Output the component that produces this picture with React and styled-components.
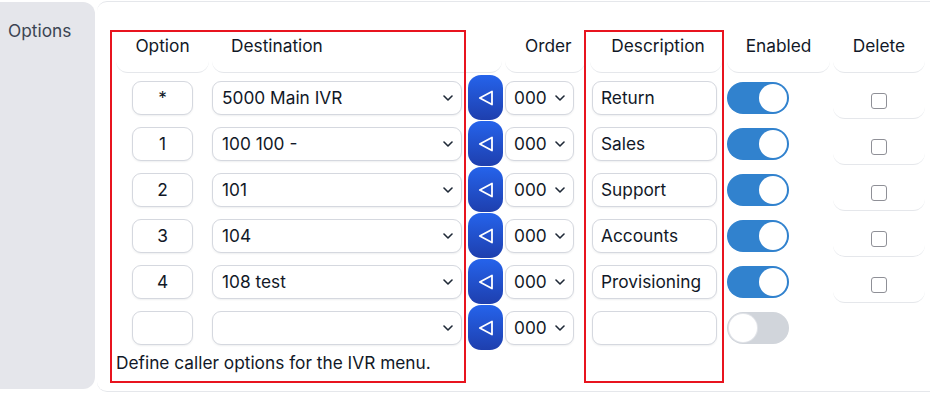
import React from "react";
import styled, { createGlobalStyle } from "styled-components";

const GlobalStyle = createGlobalStyle`
  html, body {
    margin: 0;
    padding: 0;
    background: #ffffff;
  }
  body {
    font-family: Inter, "Noto Sans", sans-serif;
    font-size: 17.3px;
    color: #111827;
  }
  * {
    box-sizing: border-box;
  }
`;

const Page = styled.div`
  display: flex;
  gap: 2px;
  width: 930px;
  padding-top: 1px;
`;

const LabelCell = styled.div`
  flex: none;
  width: 95px;
  margin: 1px 0 3px;
  padding: 18px 8px;
  background: #e5e6eb;
  border-radius: 0 12px 12px 0;
  color: #3b4452;
`;

const FieldCell = styled.div`
  flex: 1;
  padding: 28px 0 18px 19px;
  border-top: 1px solid #e5e7eb;
  border-bottom: 1px solid #e5e7eb;
  border-radius: 10px 0 0 10px;
`;

const OptionsGrid = styled.div`
  display: grid;
  grid-template-columns: 96px 253px 40px 83px 137px 108px 92px;
  grid-template-rows: 44px repeat(6, 46px) 23px;
`;

const HeadCell = styled.div`
  grid-row: 1;
  grid-column: ${(p) => p.$col};
  margin: ${(p) => p.$margin || "0 3px 1px 0"};
  padding: 6px 0 0 ${(p) => p.$padLeft || 0}px;
  text-align: ${(p) => p.$align || "center"};
  border-bottom: 1px solid #e5e7eb;
  border-radius: 0 0 12px 12px;
  color: #111827;
  line-height: 20px;
`;

const inputBase = `
  height: 34px;
  margin-top: 7px;
  align-self: start;
  display: flex;
  align-items: center;
  padding-bottom: 1px;
  border: 1px solid #d5d8df;
  border-radius: 9px;
  background: #ffffff;
  box-shadow: 0 1px 2px rgba(17, 24, 39, 0.07);
  color: #111827;
  font-size: 17.3px;
  white-space: nowrap;
`;

const KeyInput = styled.div`
  ${inputBase}
  grid-row: ${(p) => p.$row};
  grid-column: 1;
  width: 61px;
  margin-left: 16px;
  justify-content: center;
`;

const SelectBox = styled.div`
  ${inputBase}
  grid-row: ${(p) => p.$row};
  grid-column: ${(p) => p.$col};
  width: ${(p) => p.$width}px;
  justify-content: space-between;
  padding-left: ${(p) => p.$padLeft}px;
  padding-right: 8px;
`;

const DescInput = styled.div`
  ${inputBase}
  grid-row: ${(p) => p.$row};
  grid-column: 5;
  width: 125px;
  margin-left: 4px;
  padding-left: 8px;
`;

const MoveButton = styled.button`
  grid-row: ${(p) => p.$row};
  grid-column: 3;
  align-self: start;
  width: 35px;
  height: 45px;
  margin: 1px 0 0 3px;
  padding: 0;
  display: flex;
  align-items: center;
  justify-content: center;
  border: none;
  border-radius: 13px;
  background: linear-gradient(180deg, #2563eb 0%, #1e3fae 100%);
  cursor: pointer;
`;

const Toggle = styled.span`
  grid-row: ${(p) => p.$row};
  grid-column: 6;
  align-self: start;
  position: relative;
  width: 62px;
  height: 32px;
  margin: 8px 0 0 2px;
  border-radius: 16px;
  background: ${(p) => (p.$on ? "#3182ce" : "#d1d5db")};

  &::after {
    content: "";
    position: absolute;
    top: 2px;
    left: ${(p) => (p.$on ? "32px" : "2px")};
    width: 28px;
    height: 28px;
    border-radius: 50%;
    background: #ffffff;
    box-shadow: ${(p) => (p.$on ? "none" : "0 0 0 1px #e2e4e9")};
  }
`;

const DeleteCell = styled.div`
  grid-row: ${(p) => p.$row};
  grid-column: 7;
  height: 45px;
  display: flex;
  justify-content: center;
  align-items: flex-start;
  padding-top: 19px;
  border-bottom: 1px solid #e5e7eb;
  border-radius: 0 0 12px 12px;
`;

const Check = styled.input`
  appearance: none;
  width: 16px;
  height: 16px;
  margin: 0;
  border: 1.5px solid #8f9097;
  border-radius: 3px;
  background: #ffffff;
`;

const Hint = styled.div`
  grid-row: 8;
  grid-column: 1 / -1;
  padding-top: 2px;
  line-height: 21px;
  color: #111827;
`;

const Marker = styled.div`
  grid-row: 1 / -1;
  grid-column: ${(p) => p.$col};
  margin: ${(p) => p.$margin};
  border: 2px solid #e8141f;
  pointer-events: none;
  z-index: 1;
`;

const Chevron = () => (
  <svg width="10" height="6" viewBox="0 0 10 6" fill="none">
    <path d="M1 1l4 4 4-4" stroke="#1f2937" strokeWidth="1.6" strokeLinecap="round" strokeLinejoin="round" />
  </svg>
);

const BackArrow = () => (
  <svg width="16" height="16" viewBox="0 0 16 16" fill="none">
    <path d="M1.8 8L14 1.5v13z" stroke="#ffffff" strokeWidth="1.8" strokeLinejoin="round" />
  </svg>
);

const options = [
  { key: "*", dest: "5000 Main IVR", desc: "Return", on: true, del: true },
  { key: "1", dest: "100 100 -", desc: "Sales", on: true, del: true },
  { key: "2", dest: "101", desc: "Support", on: true, del: true },
  { key: "3", dest: "104", desc: "Accounts", on: true, del: true },
  { key: "4", dest: "108 test", desc: "Provisioning", on: true, del: true },
  { key: "", dest: "", desc: "", on: false, del: false },
];

export default function App() {
  return (
    <>
      <GlobalStyle />
      <Page>
        <LabelCell>Options</LabelCell>
        <FieldCell>
          <OptionsGrid>
            <HeadCell $col="1">Option</HeadCell>
            <HeadCell $col="2 / 4" $align="left" $padLeft={19}>Destination</HeadCell>
            <HeadCell $col="4" $align="left" $padLeft={20}>Order</HeadCell>
            <HeadCell $col="5" $margin="0 3px 1px 2px" $padLeft={4}>Description</HeadCell>
            <HeadCell $col="6" $margin="0 3px 1px 2px">Enabled</HeadCell>
            <HeadCell $col="7" $margin="0 0 1px 0">Delete</HeadCell>

            {options.map((o, i) => {
              const row = i + 2;
              return (
                <React.Fragment key={i}>
                  <KeyInput $row={row}>{o.key}</KeyInput>
                  <SelectBox $row={row} $col={2} $width={250} $padLeft={9}>
                    <span>{o.dest}</span>
                    <Chevron />
                  </SelectBox>
                  <MoveButton $row={row} type="button">
                    <BackArrow />
                  </MoveButton>
                  <SelectBox $row={row} $col={4} $width={69} $padLeft={8}>
                    <span>000</span>
                    <Chevron />
                  </SelectBox>
                  <DescInput $row={row}>{o.desc}</DescInput>
                  <Toggle $row={row} $on={o.on} />
                  {o.del && (
                    <DeleteCell $row={row}>
                      <Check type="checkbox" />
                    </DeleteCell>
                  )}
                </React.Fragment>
              );
            })}

            <Hint>Define caller options for the IVR menu.</Hint>
            <Marker $col="1 / 3" $margin="0 -1px -10px -6px" />
            <Marker $col="5" $margin="0 1px -10px -4px" />
          </OptionsGrid>
        </FieldCell>
      </Page>
    </>
  );
}
